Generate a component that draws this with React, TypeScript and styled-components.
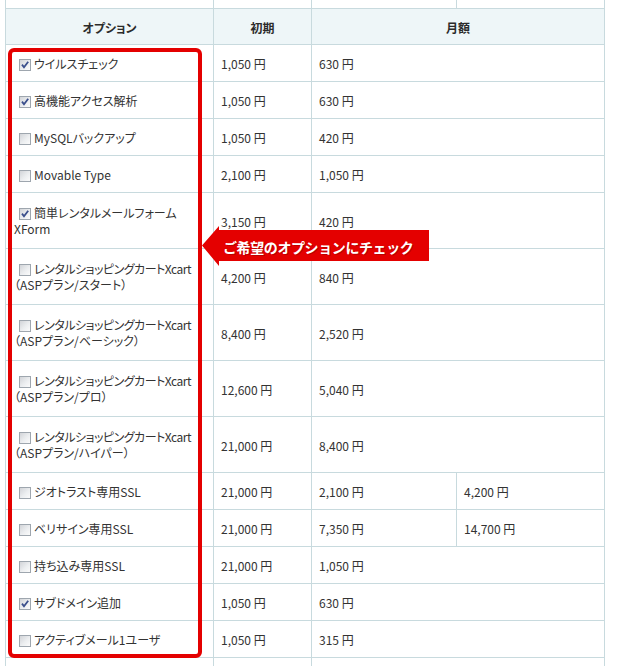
import React from "react";
import styled, { createGlobalStyle } from "styled-components";

const LINE = "#c8dade";
const RED = "#e40000";

const Global = createGlobalStyle`
  html, body { margin: 0; padding: 0; background: #fff; }
  body { font-family: "Noto Sans CJK JP", "Noto Sans", sans-serif; color: #333; }
`;

const Page = styled.div`
  position: relative;
  width: 618px;
  height: 666px;
  overflow: hidden;
  padding-left: 5px;
  box-sizing: border-box;
`;

const Table = styled.div`
  width: 600px;
  border-left: 1px solid ${LINE};
  font-size: 12px;
  font-feature-settings: "palt";
`;

const Row = styled.div<{ $h: number; $split?: boolean }>`
  display: grid;
  grid-template-columns: 208px 98px ${(p) => (p.$split ? "145px 148px" : "293px")};
  height: ${(p) => p.$h}px;
`;

const Cell = styled.div<{ $head?: boolean; $opt?: boolean }>`
  box-sizing: border-box;
  border-right: 1px solid ${LINE};
  border-bottom: 1px solid ${LINE};
  display: flex;
  align-items: center;
  padding: ${(p) => (p.$opt ? "1px 0 0 8px" : "1px 7px 0")};
  justify-content: ${(p) => (p.$head ? "center" : "flex-start")};
  background: ${(p) => (p.$head ? "#eef6f8" : "#fff")};
  font-weight: ${(p) => (p.$head ? 700 : 400)};
  color: ${(p) => (p.$head ? "#2b2b2b" : "#333")};
  white-space: nowrap;
`;

const Label = styled.div`
  line-height: 16px;
  white-space: nowrap;
`;

const Tight = styled.span`
  letter-spacing: -0.5px;
`;

const Box = styled.span<{ $on?: boolean }>`
  display: inline-block;
  box-sizing: border-box;
  width: 12px;
  height: 12px;
  margin: 0 3px 0 5px;
  vertical-align: -2px;
  border: 1px solid #9ea6ae;
  background: linear-gradient(135deg, #d2d4d8 0%, #eceef0 55%, #fbfbfb 100%);
  position: relative;
  svg { position: absolute; left: 0; top: 0; }
`;

const Frame = styled.div`
  position: absolute;
  left: 8px;
  top: 48px;
  width: 194px;
  height: 610px;
  box-sizing: border-box;
  border: 4px solid ${RED};
  border-radius: 6px;
  pointer-events: none;
`;

const Callout = styled.div`
  position: absolute;
  left: 202px;
  top: 226px;
  width: 227px;
  height: 41px;
  display: flex;
  align-items: center;
  svg { position: absolute; left: 0; top: 0; }
`;

const CalloutText = styled.span`
  position: relative;
  padding-left: 21px;
  color: #fff;
  font-weight: 700;
  font-size: 14px;
  letter-spacing: -0.4px;
  line-height: 16px;
  text-shadow: 1px 1px 0 rgba(110, 0, 0, 0.35);
`;

function Check({ on }: { on?: boolean }) {
  return (
    <Box $on={on}>
      {on && (
        <svg width="10" height="10" viewBox="0 0 10 10">
          <path d="M2 4.6 L4 7.2 L8.2 1.8" fill="none" stroke="#3b4f8c" strokeWidth="1.8" />
        </svg>
      )}
    </Box>
  );
}

type Item = {
  on?: boolean;
  name: React.ReactNode;
  init: string;
  month: string;
  month2?: string;
  tall?: boolean;
};

const cart = <Tight>レンタルショッピングカートXcart</Tight>;

const items: Item[] = [
  { on: true, name: "ウイルスチェック", init: "1,050 円", month: "630 円" },
  { on: true, name: "高機能アクセス解析", init: "1,050 円", month: "630 円" },
  { name: "MySQLバックアップ", init: "1,050 円", month: "420 円" },
  { name: "Movable Type", init: "2,100 円", month: "1,050 円" },
  { on: true, name: <>簡単レンタルメールフォーム<br />XForm</>, init: "3,150 円", month: "420 円", tall: true },
  { name: <>{cart}<br />（ASPプラン/スタート）</>, init: "4,200 円", month: "840 円", tall: true },
  { name: <>{cart}<br />（ASPプラン/ベーシック）</>, init: "8,400 円", month: "2,520 円", tall: true },
  { name: <>{cart}<br />（ASPプラン/プロ）</>, init: "12,600 円", month: "5,040 円", tall: true },
  { name: <>{cart}<br />（ASPプラン/ハイパー）</>, init: "21,000 円", month: "8,400 円", tall: true },
  { name: "ジオトラスト専用SSL", init: "21,000 円", month: "2,100 円", month2: "4,200 円" },
  { name: "ベリサイン専用SSL", init: "21,000 円", month: "7,350 円", month2: "14,700 円" },
  { name: "持ち込み専用SSL", init: "21,000 円", month: "1,050 円" },
  { on: true, name: "サブドメイン追加", init: "1,050 円", month: "630 円" },
  { name: "アクティブメール1ユーザ", init: "1,050 円", month: "315 円" },
];

export default function App() {
  return (
    <Page>
      <Global />
      <Table>
        <Row $h={9} $split>
          <Cell />
          <Cell />
          <Cell />
          <Cell />
        </Row>
        <Row $h={36}>
          <Cell $head>オプション</Cell>
          <Cell $head>初期</Cell>
          <Cell $head>月額</Cell>
        </Row>
        {items.map((it, i) => (
          <Row key={i} $h={it.tall ? 56 : 37} $split={!!it.month2}>
            <Cell $opt>
              <Label>
                <Check on={it.on} />
                {it.name}
              </Label>
            </Cell>
            <Cell>{it.init}</Cell>
            <Cell>{it.month}</Cell>
            {it.month2 && <Cell>{it.month2}</Cell>}
          </Row>
        ))}
        <Row $h={9}>
          <Cell />
          <Cell />
          <Cell />
        </Row>
      </Table>
      <Frame />
      <Callout>
        <svg width="227" height="41" viewBox="0 0 227 41">
          <polygon points="0,19.5 17,0 17,4 227,4 227,35 17,35 17,40" fill={RED} />
        </svg>
        <CalloutText>ご希望のオプションにチェック</CalloutText>
      </Callout>
    </Page>
  );
}
